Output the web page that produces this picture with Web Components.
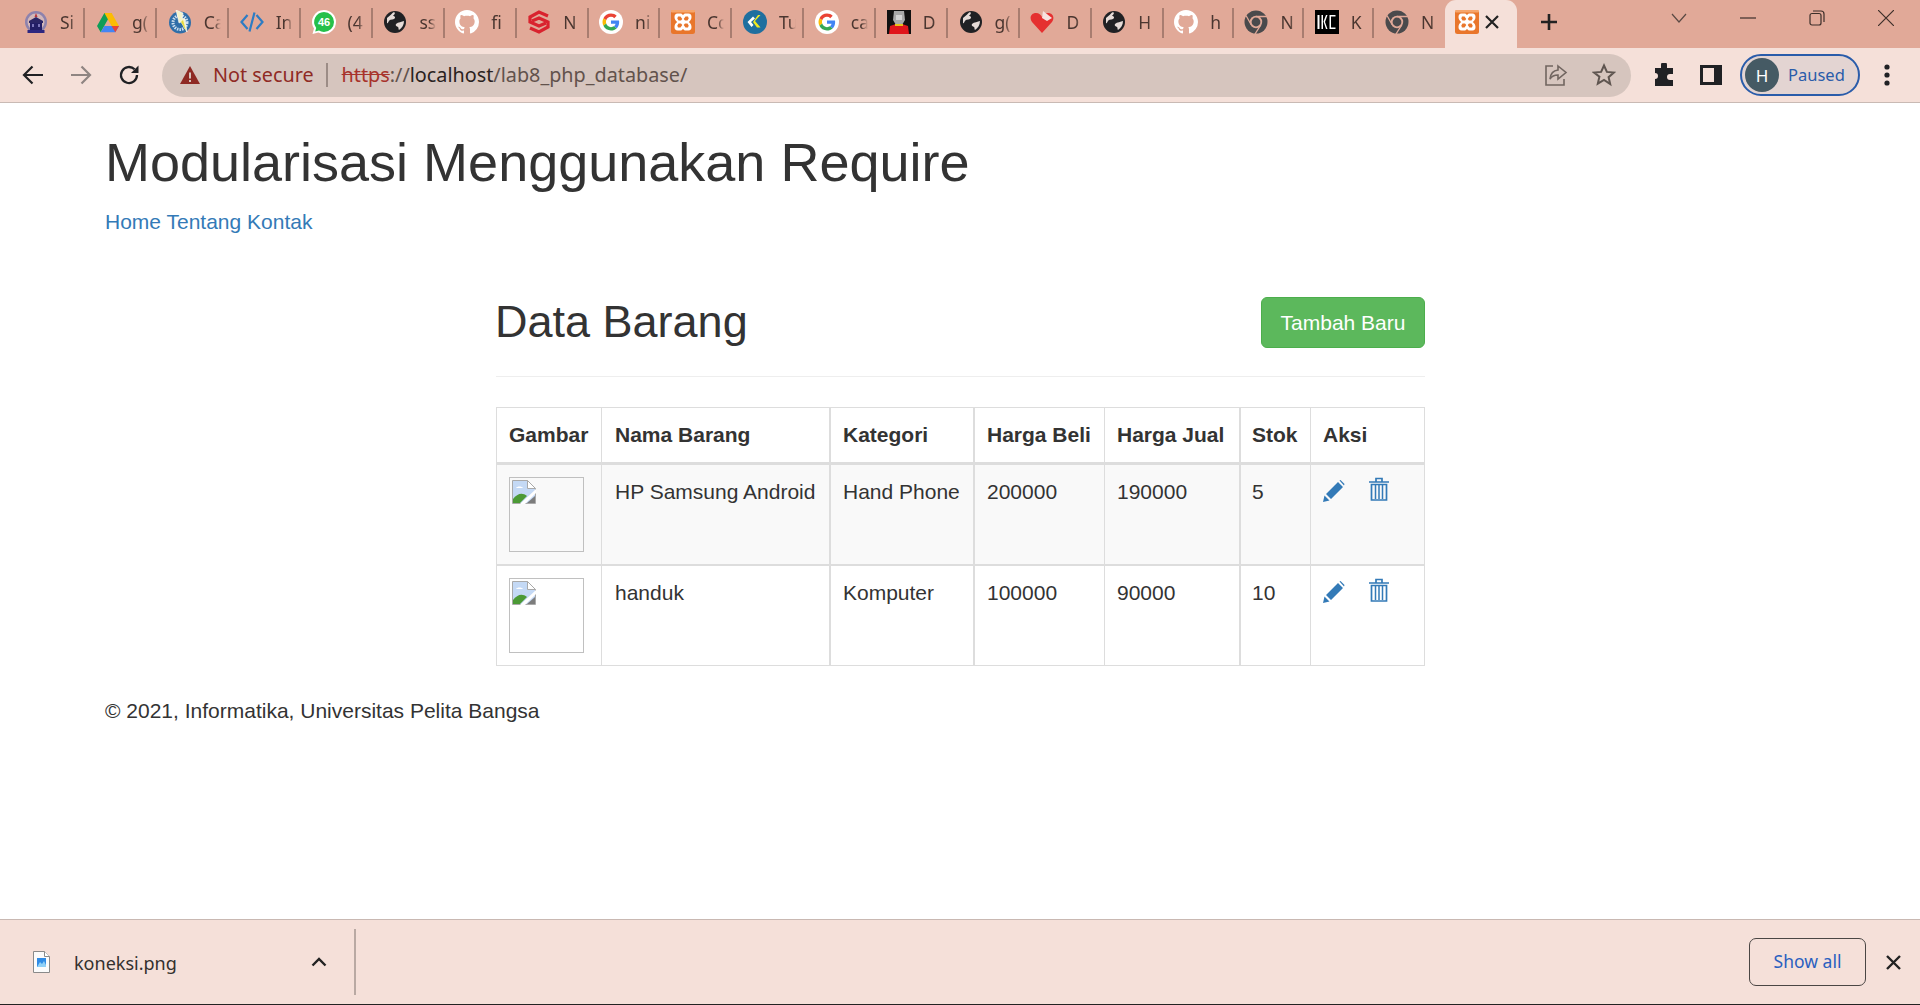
<!DOCTYPE html>
<html lang="id">
<head>
<meta charset="utf-8">
<title>Data Barang</title>
<style>
  html, body { margin: 0; height: 100%; }
  body { display: flex; flex-direction: column; overflow: hidden; background: #fff; font-family: "Liberation Sans", Arial, sans-serif; color: #333; }
</style>
</head>
<body>
<browser-tabstrip>
  <browser-tab icon="crest">Si</browser-tab>
  <browser-tab icon="drive">g(</browser-tab>
  <browser-tab icon="bolt">Ca</browser-tab>
  <browser-tab icon="code">In</browser-tab>
  <browser-tab icon="whatsapp">(4</browser-tab>
  <browser-tab icon="globe">ss</browser-tab>
  <browser-tab icon="github">fi</browser-tab>
  <browser-tab icon="redz">N</browser-tab>
  <browser-tab icon="google">ni</browser-tab>
  <browser-tab icon="xampp">Cc</browser-tab>
  <browser-tab icon="ck">Tu</browser-tab>
  <browser-tab icon="google">ca</browser-tab>
  <browser-tab icon="photo">D</browser-tab>
  <browser-tab icon="globe">g(</browser-tab>
  <browser-tab icon="heart">D</browser-tab>
  <browser-tab icon="globe">H</browser-tab>
  <browser-tab icon="github" narrow>h</browser-tab>
  <browser-tab icon="chrome" narrow>N</browser-tab>
  <browser-tab icon="ikc" narrow>K</browser-tab>
  <browser-tab icon="chrome" narrow last>N</browser-tab>
  <browser-tab icon="xampp" active></browser-tab>
</browser-tabstrip>
<browser-toolbar></browser-toolbar>
<page-main>
  <site-header title="Modularisasi Menggunakan Require">
    <a href="#">Home</a> <a href="#">Tentang</a> <a href="#">Kontak</a>
  </site-header>
  <data-panel heading="Data Barang" action="Tambah Baru">
    <barang-row head>
      <barang-cell>Gambar</barang-cell><barang-cell>Nama Barang</barang-cell><barang-cell>Kategori</barang-cell><barang-cell>Harga Beli</barang-cell><barang-cell>Harga Jual</barang-cell><barang-cell>Stok</barang-cell><barang-cell>Aksi</barang-cell>
    </barang-row>
    <barang-row striped>
      <barang-cell class="pic"><broken-img></broken-img></barang-cell><barang-cell>HP Samsung Android</barang-cell><barang-cell>Hand Phone</barang-cell><barang-cell>200000</barang-cell><barang-cell>190000</barang-cell><barang-cell>5</barang-cell><barang-cell><row-actions></row-actions></barang-cell>
    </barang-row>
    <barang-row>
      <barang-cell class="pic"><broken-img></broken-img></barang-cell><barang-cell>handuk</barang-cell><barang-cell>Komputer</barang-cell><barang-cell>100000</barang-cell><barang-cell>90000</barang-cell><barang-cell>10</barang-cell><barang-cell><row-actions></row-actions></barang-cell>
    </barang-row>
  </data-panel>
  <site-footer>© 2021, Informatika, Universitas Pelita Bangsa</site-footer>
</page-main>
<download-bar file="koneksi.png"></download-bar>

<script>
const CHROME_FONT = '"Noto Sans", "Open Sans", sans-serif';
const GITHUB_PATH = 'M8 0C3.58 0 0 3.58 0 8c0 3.54 2.29 6.53 5.47 7.59.4.07.55-.17.55-.38 0-.19-.01-.82-.01-1.49-2.01.37-2.53-.49-2.69-.94-.09-.23-.48-.94-.82-1.13-.28-.15-.68-.52-.01-.53.63-.01 1.08.58 1.23.82.72 1.21 1.87.87 2.33.66.07-.52.28-.87.51-1.07-1.78-.2-3.64-.89-3.64-3.95 0-.87.31-1.59.82-2.15-.08-.2-.36-1.02.08-2.12 0 0 .67-.21 2.2.82.64-.18 1.32-.27 2-.27.68 0 1.36.09 2 .27 1.53-1.04 2.2-.82 2.2-.82.44 1.1.16 1.92.08 2.12.51.56.82 1.27.82 2.15 0 3.07-1.87 3.75-3.65 3.95.29.25.54.73.54 1.48 0 1.07-.01 1.93-.01 2.2 0 .21.15.46.55.38A8.013 8.013 0 0016 8c0-4.42-3.58-8-8-8z';

const FAVICONS = {
  crest: `<svg viewBox="0 0 24 24"><circle cx="12" cy="12" r="11" fill="#8d82ad"/><circle cx="12" cy="12" r="8.500" fill="#d3b7b8"/><path d="M12 3l1.500 4h-3z" fill="#b8333a"/><path d="M5 11l7-4 7 4v2H5z" fill="#2b2566"/><path d="M6 13h12v7H6z" fill="#231e66"/><path d="M8 14h2v3H8zM14 14h2v3h-2z" fill="#7a74b8"/><path d="M3.500 20h17v3h-17z" fill="#2d2780"/></svg>`,
  drive: `<svg viewBox="0 0 24 24"><path d="M8.400 3h7.200L12 9.300 4.700 22.200 1 16z" fill="#0f9d58"/><path d="M8.400 3h7.200L23 16h-7.400z" fill="#fbbc04"/><path d="M8.400 16H23l-3.700 6.200H4.700z" fill="#4285f4"/><path d="M15.600 16H23l-3.700 6.200z" fill="#ea4335"/></svg>`,
  bolt: `<svg viewBox="0 0 24 24"><circle cx="12" cy="12.500" r="11" fill="#2f6ea8"/><circle cx="12" cy="12.500" r="7" fill="none" stroke="#cfe0ee" stroke-width="3" stroke-dasharray="1.500 1"/><circle cx="12" cy="12.500" r="4" fill="#2f6ea8"/><path d="M8 0l7 3-1 5 3 1 2 13-6-10-2 1z" fill="#f5f3c9" stroke="#fff" stroke-width=".6"/><path d="M15 10l3 11-5-9z" fill="#e7dc3c"/></svg>`,
  code: `<svg viewBox="0 0 24 24" fill="none" stroke="#2c7cc4" stroke-width="2.200"><path d="M7.500 5L1.500 12l6 7M16.500 5l6 7-6 7M14.500 2.500l-5 19" /></svg>`,
  whatsapp: `<svg viewBox="0 0 24 24"><path d="M12 0a12 12 0 0 1 0 24c-2 0-4-.5-5.700-1.400L.5 24l1.500-5.500A12 12 0 0 1 12 0z" fill="#fff"/><path d="M12 2a10 10 0 0 1 0 20c-1.900 0-3.600-.5-5-1.400l-3.800 1 1-3.600A10 10 0 0 1 12 2z" fill="#25c04a"/><text x="12" y="16" font-family="Liberation Sans" font-weight="700" font-size="11" fill="#fff" text-anchor="middle">46</text></svg>`,
  globe: `<svg viewBox="0 0 24 24"><circle cx="12" cy="12" r="11" fill="#202124"/><path d="M4 8c3-2 5-5 7-6 2 1 0 3-1 4 2 0 3 2 1 3-2 1-4 0-5 2-1 1-1 3-2 2zM13 14c2-2 6-2 8-3 0 4-2 7-5 9-1-1 0-2-1-3-1-1-3-1-2-3z" fill="#e6dcd8"/></svg>`,
  github: `<svg viewBox="0 0 16 16"><path d="${GITHUB_PATH}" fill="#fff"/></svg>`,
  redz: `<svg viewBox="0 0 24 24" fill="none" stroke="#d9232e" stroke-width="3.200"><path d="M21 6l-9-4-9 5v5l9 4 7-3"/><path d="M3 18l9 4 9-5v-5l-9-4-7 3"/></svg>`,
  google: `<svg viewBox="0 0 24 24"><circle cx="12" cy="12" r="12" fill="#fff"/><g transform="translate(3.500 3.500) scale(.354)"><path fill="#EA4335" d="M24 9.500c3.540 0 6.710 1.220 9.210 3.600l6.850-6.850C35.900 2.380 30.470 0 24 0 14.620 0 6.510 5.380 2.560 13.220l7.980 6.190C12.430 13.720 17.740 9.500 24 9.500z"/><path fill="#4285F4" d="M46.980 24.550c0-1.570-.15-3.090-.38-4.550H24v9.020h12.940c-.58 2.960-2.260 5.480-4.780 7.180l7.730 6c4.510-4.180 7.090-10.360 7.090-17.650z"/><path fill="#FBBC05" d="M10.530 28.590c-.48-1.450-.76-2.990-.76-4.590s.27-3.140.76-4.590l-7.980-6.190C.92 16.460 0 20.120 0 24c0 3.880.92 7.540 2.560 10.780l7.970-6.190z"/><path fill="#34A853" d="M24 48c6.480 0 11.930-2.130 15.890-5.810l-7.730-6c-2.150 1.450-4.920 2.300-8.160 2.300-6.260 0-11.570-4.220-13.470-9.910l-7.980 6.190C6.510 42.620 14.620 48 24 48z"/></g></svg>`,
  xampp: `<svg viewBox="0 0 24 24"><rect width="24" height="24" rx="2.500" fill="#e9762b"/><rect width="24" height="2.500" rx="1.200" fill="#f6a56b"/><path d="M6.500 3.500h3c1.100 0 1.700.6 2.500 1.500.8-.9 1.400-1.500 2.500-1.500h3c2 0 3 1.500 3 3.500 0 2.200-1.100 3.800-2.700 5 1.600 1.200 2.700 2.800 2.700 5 0 2-1 3.500-3 3.500h-3c-1.100 0-1.700-.6-2.500-1.500-.8.9-1.400 1.500-2.500 1.500h-3c-2 0-3-1.500-3-3.500 0-2.200 1.100-3.800 2.700-5-1.600-1.200-2.700-2.800-2.700-5 0-2 1-3.500 3-3.500z" fill="#fff"/><path d="M7 6.500h2.500L11.300 9 10 10.500H7.500L6.300 8.500zM17 6.500h-2.500L12.700 9l1.300 1.500h2.500l1.200-2zM7 17.500h2.500l1.800-2.500-1.300-1.500H7.500l-1.200 2zM17 17.500h-2.500L12.700 15l1.300-1.500h2.500l1.200 2z" fill="#e9762b"/></svg>`,
  ck: `<svg viewBox="0 0 24 24"><circle cx="12" cy="12" r="12" fill="#1f6f9f"/><path d="M10 6.500l-5.500 5.500 4 5 2-2-2.500-3L12 8.500z" fill="#fff"/><path d="M17.500 5l-5.500 6 5.500 6.500h-3.500L10 12l5-7z" fill="#f2ea1e"/></svg>`,
  photo: `<svg viewBox="0 0 24 24"><rect width="24" height="24" fill="#111"/><path d="M7 1h10l1 9-3 5H9L6 10z" fill="#a9a9a9"/><path d="M9 5h6v5H9z" fill="#d4d4d4"/><path d="M2 24l1-8 6-2 3 2 3-2 6 2 1 8z" fill="#e0161b"/><path d="M8 14h8v2H8z" fill="#e8c21a"/></svg>`,
  heart: `<svg viewBox="0 0 24 24"><path d="M12 23L2 12C-1 8 1 3 6 3c3 0 5 2 6 4 1-2 3-4 6-4 5 0 7 5 4 9z" fill="#e53030"/><path d="M13 1l9 7-5 3-5-3z" fill="#f7e3e0"/></svg>`,
  chrome: `<svg viewBox="0 0 24 24"><circle cx="12" cy="12" r="11.500" fill="#4a4a4c"/><circle cx="12" cy="12" r="6.200" fill="#e1a998"/><circle cx="12" cy="12" r="4.400" fill="#4a4a4c"/><path d="M12 6.500H23M7.200 14.800L2 5.500M16.800 14.800L11 24" stroke="#e1a998" stroke-width="1.300"/></svg>`,
  ikc: `<svg viewBox="0 0 24 24"><rect width="24" height="24" fill="#000"/><path d="M2.500 5h2v14h-2zM6.500 5h1.500v14H6.500zM8.500 11.500l2.500-6.500h1.500L10 12l2.500 7H11zM14.500 5h6v1.500h-4.500v11H20.500V19h-6z" fill="#fff"/></svg>`
};

class FavIcon extends HTMLElement {
  constructor() {
    super();
    this.attachShadow({ mode: 'open' });
    this.shadowRoot.innerHTML = `<style>
      :host { display: block; width: 24px; height: 24px; flex: none; }
      svg { display: block; width: 24px; height: 24px; }
    </style>${FAVICONS[this.getAttribute('name')] || ''}`;
  }
}

class BrowserTabstrip extends HTMLElement {
  constructor() {
    super();
    this.attachShadow({ mode: 'open' });
    this.shadowRoot.innerHTML = `<style>
      :host { display: flex; height: 48px; flex: none; background: #e1a998; padding-left: 13.4px; }
      .new { box-sizing: border-box; width: 32px; margin-left: 16px; padding-bottom: 4px; display: flex; align-items: center; justify-content: center; }
      .win { margin-left: auto; display: flex; }
      .win div { width: 69px; height: 36px; display: flex; align-items: center; justify-content: center; }
      svg { display: block; }
    </style>
    <slot></slot>
    <div class="new"><svg width="20" height="20" viewBox="0 0 20 20"><path d="M10 2v16M2 10h16" stroke="#222" stroke-width="2.600"/></svg></div>
    <div class="win">
      <div><svg width="18" height="12" viewBox="0 0 18 12" fill="none" stroke="#5b4a44" stroke-width="1.200"><path d="M2 2l7 8 7-8"/></svg></div>
      <div><svg width="16" height="4" viewBox="0 0 16 4" stroke="#3d2f2a" stroke-width="1.200"><path d="M0 2h16"/></svg></div>
      <div><svg width="16" height="16" viewBox="0 0 16 16" fill="none" stroke="#3d2f2a" stroke-width="1.200"><rect x="1" y="3.500" width="11" height="11.500" rx="2"/><path d="M4 1h8a3 3 0 0 1 3 3v8"/></svg></div>
      <div><svg width="16" height="16" viewBox="0 0 16 16" stroke="#3d2f2a" stroke-width="1.200"><path d="M0 0l16 16M16 0L0 16"/></svg></div>
    </div>`;
  }
}

class BrowserTab extends HTMLElement {
  constructor() {
    super();
    this.attachShadow({ mode: 'open' });
    const icon = this.getAttribute('icon');
    const active = this.hasAttribute('active');
    this.shadowRoot.innerHTML = `<style>
      :host { display: flex; align-items: center; position: relative; box-sizing: border-box; height: 48px; width: 71.9px; padding: 0 0 4px 10.6px; flex: none;
        font: 17.500px ${CHROME_FONT}; color: #4a3630; }
      :host([narrow]) { width: 70.25px; }
      :host([active]) { width: 72px; background: #f5e0d9; border-radius: 11px 11px 0 0; }
      .label { margin-left: 12px; width: 17px; overflow: hidden; white-space: nowrap;
        -webkit-mask-image: linear-gradient(to right, #000 60%, transparent); mask-image: linear-gradient(to right, #000 60%, transparent); }
      .sep { position: absolute; right: 0; top: 8px; width: 2px; height: 30px; background: #a87d70; }
      :host([last]) .sep, :host([active]) .sep { display: none; }
      .close { display: block; margin-left: 6px; }
    </style>
    <fav-icon name="${icon}"></fav-icon>
    ${active
      ? `<svg class="close" width="14" height="14" viewBox="0 0 14 14" stroke="#222" stroke-width="2.200"><path d="M1 1l12 12M13 1L1 13"/></svg>`
      : `<span class="label"><slot></slot></span><span class="sep"></span>`}`;
  }
}

class BrowserToolbar extends HTMLElement {
  constructor() {
    super();
    this.attachShadow({ mode: 'open' });
    this.shadowRoot.innerHTML = `<style>
      :host { display: flex; align-items: center; flex: none; box-sizing: content-box; height: 54px; padding: 0 6px 0 9px; background: #f5e0d9;
        border-bottom: 1px solid #c9bab4; font: 19.800px ${CHROME_FONT}; }
      .btn { width: 48px; height: 48px; display: flex; align-items: center; justify-content: center; flex: none; }
      .omni { flex: 1; height: 43px; margin: 0 10px 0 9px; border-radius: 22px; background: #d6c5be; display: flex; align-items: center; padding-left: 17px; min-width: 0; }
      .warn { color: #8f2a24; margin: 0 0 2px 12px; }
      .bar { width: 2px; height: 24px; background: #9c8c86; margin: 0 14px 0 12px; }
      .url { color: #62524c; margin-bottom: 2px; }
      .url s { color: #a8332c; text-decoration-color: #a8332c; }
      .url b { font-weight: 400; color: #2a2220; }
      .right { margin-left: auto; display: flex; align-items: center; }
      .right .ico { width: 48px; display: flex; justify-content: center; }
      .tool { width: 46.500px; display: flex; justify-content: center; flex: none; }
      .pill { box-sizing: border-box; width: 120px; height: 42px; margin-left: 6px; border: 2px solid #2a5caa; border-radius: 21px; background: #e3d4d2; display: flex; align-items: center; padding-left: 3px; flex: none; color: #2a5caa; font-size: 16.500px; }
      .avatar { width: 34px; height: 34px; border-radius: 50%; background: #455a64; color: #fff; display: flex; align-items: center; justify-content: center; font-size: 17px; margin-right: 9px; }
      .pill .txt { margin-bottom: 2px; }
      .menu { width: 54px; display: flex; justify-content: center; flex: none; }
      svg { display: block; }
    </style>
    <div class="btn"><svg width="22" height="20" viewBox="0 0 22 20" fill="none" stroke="#202124" stroke-width="2.200"><path d="M21 10H2.500M10.500 1.500L2 10l8.500 8.500"/></svg></div>
    <div class="btn"><svg width="22" height="20" viewBox="0 0 22 20" fill="none" stroke="#8f8582" stroke-width="2.200"><path d="M1 10h18.500M11.500 1.500L20 10l-8.500 8.500"/></svg></div>
    <div class="btn"><svg width="22" height="22" viewBox="0 0 22 22" fill="none"><path d="M19 11a8 8 0 1 1-2.400-5.700" stroke="#202124" stroke-width="2.300"/><path d="M20.500 1.500v7.500H13z" fill="#202124"/></svg></div>
    <div class="omni">
      <svg width="22" height="20" viewBox="0 0 22 20"><path d="M11 1l10 18H1z" fill="#8f2a24"/><path d="M10 7.500h2v6h-2zM10 15h2v2h-2z" fill="#d6c5be"/></svg>
      <span class="warn">Not secure</span><span class="bar"></span>
      <span class="url"><s>https</s>://<b>localhost</b>/lab8_php_database/</span>
      <div class="right">
        <div class="ico"><svg width="24" height="24" viewBox="0 0 24 24" fill="none" stroke="#716560" stroke-width="1.600"><path d="M9 3H2v19h18v-6"/><path d="M14 3l8 6.500-8 6.500v-4c-4 0-6.500 1.500-8 4 .5-5 3.500-8.500 8-9z"/></svg></div>
        <div class="ico" style="margin-right:3px"><svg width="24" height="24" viewBox="0 0 24 24" fill="none" stroke="#5f5550" stroke-width="2"><path d="M12 2.500l2.900 6.400 7 .7-5.300 4.600 1.600 6.900L12 17l-6.200 3.600 1.600-6.900L2.100 9.600l7-.7z"/></svg></div>
      </div>
    </div>
    <div class="tool"><svg width="22" height="24" viewBox="0 0 22 24"><path d="M8 2a3 3 0 0 1 6 0v3h6v6h-3a3 3 0 0 0 0 6h3v6H2v-7a3 3 0 0 0 0-6V5h6z" fill="#202124"/></svg></div>
    <div class="tool"><svg width="22" height="22" viewBox="0 0 22 22"><path d="M0 1h22v20H0z" fill="#202124"/><path d="M3 4h11v14H3z" fill="#f5e0d9"/></svg></div>
    <div class="pill"><span class="avatar">H</span><span class="txt">Paused</span></div>
    <div class="menu"><svg width="6" height="22" viewBox="0 0 6 22" fill="#202124"><circle cx="3" cy="3" r="2.600"/><circle cx="3" cy="11" r="2.600"/><circle cx="3" cy="19" r="2.600"/></svg></div>`;
  }
}

class PageMain extends HTMLElement {
  constructor() {
    super();
    this.attachShadow({ mode: 'open' });
    this.shadowRoot.innerHTML = `<style>
      :host { display: block; flex: 1; min-height: 0; overflow: hidden; background: #fff; color: #333; font: 21px/28px "Liberation Sans", Arial, sans-serif; }
    </style><slot></slot>`;
  }
}

class SiteHeader extends HTMLElement {
  constructor() {
    super();
    this.attachShadow({ mode: 'open' });
    this.shadowRoot.innerHTML = `<style>
      :host { display: block; padding: 31px 0 0 105px; }
      h1 { margin: 0 0 18px; font-size: 54px; line-height: 56px; font-weight: 500; }
      nav ::slotted(a) { color: #337ab7; text-decoration: none; }
    </style>
    <h1>${this.getAttribute('title')}</h1>
    <nav><slot></slot></nav>`;
  }
}

class DataPanel extends HTMLElement {
  constructor() {
    super();
    this.attachShadow({ mode: 'open' });
    this.shadowRoot.innerHTML = `<style>
      :host { display: block; width: 929px; margin: 61px 0 0 496px; }
      .top { display: flex; align-items: center; justify-content: space-between; padding-bottom: 28px; border-bottom: 1px solid #eee; margin-bottom: 30px; }
      h2 { margin: 0 0 1px -1px; font-size: 45px; line-height: 50px; font-weight: 500; }
      .add { box-sizing: border-box; width: 164px; height: 51px; display: flex; align-items: center; justify-content: center; background: #5cb85c; border: 1px solid #4cae4c; border-radius: 6px; color: #fff; text-decoration: none; }
      .table { border-top: 1px solid #ddd; }
    </style>
    <div class="top"><h2>${this.getAttribute('heading')}</h2><a class="add" href="#">${this.getAttribute('action')}</a></div>
    <div class="table"><slot></slot></div>`;
  }
}

class BarangRow extends HTMLElement {
  constructor() {
    super();
    this.attachShadow({ mode: 'open' });
    this.shadowRoot.innerHTML = `<style>
      :host { display: grid; grid-template-columns: 105px 228px 144px 131px 135px 71px 115px; border-bottom: 2px solid #ddd; }
      :host([head]) { border-bottom-width: 3px; font-weight: 700; }
      :host([striped]) { background: #f9f9f9; }
      :host(:last-child) { border-bottom-width: 1px; }
    </style><slot></slot>`;
  }
}

class BarangCell extends HTMLElement {
  constructor() {
    super();
    this.attachShadow({ mode: 'open' });
    this.shadowRoot.innerHTML = `<style>
      :host { display: block; box-sizing: border-box; min-width: 0; padding: 13px 0 11px 12px; border-left: 1px solid #ddd; white-space: nowrap; }
      :host(.pic) { padding-top: 12px; padding-bottom: 12px; }
      :host-context([head]) { padding-top: 13px; padding-bottom: 13px; }
      :host(:nth-child(3)), :host(:nth-child(4)), :host(:nth-child(6)) { border-left-width: 2px; }
      :host(:nth-child(6)) { padding-left: 11px; }
      :host(:nth-child(2)) { padding-left: 13px; }
      :host(:nth-child(7)) { border-right: 1px solid #ddd; }
    </style><slot></slot>`;
  }
}

class BrokenImg extends HTMLElement {
  constructor() {
    super();
    this.attachShadow({ mode: 'open' });
    this.shadowRoot.innerHTML = `<style>
      :host { display: block; box-sizing: border-box; width: 75px; height: 75px; border: 1px solid #c0c0c0; padding: 2px; }
      svg { display: block; }
    </style>
    <svg width="24" height="24" viewBox="0 0 24 24">
      <path d="M.500.500h15l8 8v15H.500z" fill="#c4d9f5" stroke="#a9a9a9"/>
      <path d="M15.500.500v8h8z" fill="#fff" stroke="#a9a9a9"/>
      <path d="M4 8c1-2 6-2 7 0z" fill="#fff"/>
      <path d="M1 23V19c4-5 9-7 14-3l-7 7z" fill="#4c9a36"/>
      <path d="M15 23l8-7v7z" fill="#7c7c7c"/>
      <path d="M8 24l16-15v4L13 24z" fill="#fff"/>
    </svg>`;
  }
}

class RowActions extends HTMLElement {
  constructor() {
    super();
    this.attachShadow({ mode: 'open' });
    this.shadowRoot.innerHTML = `<style>
      :host { display: flex; align-items: flex-start; gap: 24px; height: 24px; padding-top: 2px; color: #337ab7; }
      svg { display: block; flex: none; }
    </style>
    <svg width="22" height="22" viewBox="0 0 22 22" fill="#337ab7"><path d="M0 22l1.500-6.500 5 5zM3 14L15 2l5 5L8 19zM16.500.5l1-.5 4 4-.5 1.500z"/></svg>
    <svg width="20" height="24" viewBox="0 0 20 24" fill="none" stroke="#337ab7" stroke-width="1.700" style="margin-top:-3px"><path d="M0 5h20M7 5V1.500h6V5"/><path d="M2.500 7.500V23h15V7.500h-15z"/><path d="M6.500 8v14M10 8v14M13.500 8v14" stroke-width="1.500"/></svg>`;
  }
}

class SiteFooter extends HTMLElement {
  constructor() {
    super();
    this.attachShadow({ mode: 'open' });
    this.shadowRoot.innerHTML = `<style>
      :host { display: block; padding: 31px 0 0 105px; }
    </style><slot></slot>`;
  }
}

class DownloadBar extends HTMLElement {
  constructor() {
    super();
    this.attachShadow({ mode: 'open' });
    this.shadowRoot.innerHTML = `<style>
      :host { display: flex; align-items: center; flex: none; box-sizing: border-box; height: 86px; background: #f5e0d9; border-top: 1px solid #c9b8b2; border-bottom: 1px solid #222; padding-left: 33px; font: 18px ${CHROME_FONT}; color: #33302e; }
      .name { margin: 2px 0 0 24px; width: 230px; }
      .chev { width: 30px; margin-right: 20px; display: flex; justify-content: center; }
      .sep { width: 2px; height: 66px; background: #b9a9a3; }
      .show { margin-left: auto; box-sizing: border-box; width: 117px; height: 48px; padding-bottom: 2px; border: 1px solid #4a4644; border-radius: 7px; display: flex; align-items: center; justify-content: center; color: #2a5fc0; font-size: 17.500px; }
      .x { width: 54px; display: flex; justify-content: center; }
      svg { display: block; }
    </style>
    <svg width="17" height="22" viewBox="0 0 17 22"><path d="M.5.500h11l5 5v16H.5z" fill="#fbfbfb" stroke="#8a8a8a"/><path d="M11.500.5v5h5" fill="#fff" stroke="#8a8a8a"/><rect x="4" y="7" width="9" height="9" fill="#2f8be6"/><path d="M4 16l3-5 2 2 2-3 2 4v2z" fill="#8fd0f7"/></svg>
    <span class="name">${this.getAttribute('file')}</span>
    <span class="chev"><svg width="16" height="10" viewBox="0 0 16 10" fill="none" stroke="#222" stroke-width="2.400"><path d="M1.500 8.500L8 2l6.500 6.500"/></svg></span>
    <span class="sep"></span>
    <span class="show">Show all</span>
    <span class="x"><svg width="15" height="15" viewBox="0 0 15 15" stroke="#222" stroke-width="2.400"><path d="M1 1l13 13M14 1L1 14"/></svg></span>`;
  }
}

customElements.define('fav-icon', FavIcon);
customElements.define('browser-tabstrip', BrowserTabstrip);
customElements.define('browser-tab', BrowserTab);
customElements.define('browser-toolbar', BrowserToolbar);
customElements.define('page-main', PageMain);
customElements.define('site-header', SiteHeader);
customElements.define('data-panel', DataPanel);
customElements.define('barang-row', BarangRow);
customElements.define('barang-cell', BarangCell);
customElements.define('broken-img', BrokenImg);
customElements.define('row-actions', RowActions);
customElements.define('site-footer', SiteFooter);
customElements.define('download-bar', DownloadBar);
</script>
</body>
</html>
